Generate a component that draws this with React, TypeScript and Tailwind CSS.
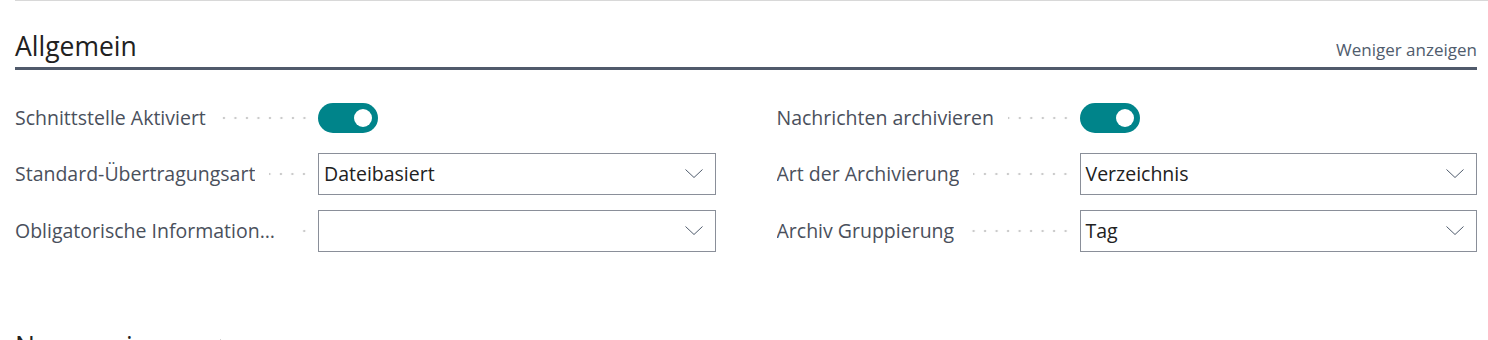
import React from "react";

type Field =
  | { label: string; kind: "toggle"; on: boolean }
  | { label: string; kind: "select"; value: string };

const LEFT: Field[] = [
  { label: "Schnittstelle Aktiviert", kind: "toggle", on: true },
  { label: "Standard-Übertragungsart", kind: "select", value: "Dateibasiert" },
  { label: "Obligatorische Informationen", kind: "select", value: "" },
];

const RIGHT: Field[] = [
  { label: "Nachrichten archivieren", kind: "toggle", on: true },
  { label: "Art der Archivierung", kind: "select", value: "Verzeichnis" },
  { label: "Archiv Gruppierung", kind: "select", value: "Tag" },
];

function ChevronDown() {
  return (
    <svg width="18" height="9" viewBox="0 0 18 9" fill="none" className="shrink-0">
      <path d="M0.5 0.5 L9 8.5 L17.5 0.5" stroke="#505c6d" strokeWidth="1" />
    </svg>
  );
}

function Toggle({ on }: { on: boolean }) {
  return (
    <div
      className={`flex h-[30px] w-[60px] items-center rounded-full px-[6px] ${
        on ? "justify-end bg-[#00848a]" : "justify-start border border-[#605e5c] bg-white"
      }`}
    >
      <div className={`h-[18px] w-[18px] rounded-full ${on ? "bg-white" : "bg-[#605e5c]"}`} />
    </div>
  );
}

function Select({ value }: { value: string }) {
  return (
    <div className="flex h-[42px] w-full items-center justify-between border border-[#8a8f99] bg-white pl-[5px] pr-[12px]">
      <span className="text-[19.5px] text-[#212121]">{value}</span>
      <ChevronDown />
    </div>
  );
}

function FieldRow({ field }: { field: Field }) {
  return (
    <div className="flex h-[42px] items-center">
      <div className="flex w-[303px] shrink-0 items-center pr-[8px]">
        <span className="max-w-[266px] truncate text-[19.5px] text-[#4a505c]">
          {field.label}
        </span>
        <div className="ml-[14px] h-[4px] min-w-0 flex-1 bg-[radial-gradient(circle,#cbcbcb_1px,transparent_1.6px)] bg-[length:11.5px_4px] bg-right bg-repeat-x" />
      </div>
      <div className="flex-1">
        {field.kind === "toggle" ? <Toggle on={field.on} /> : <Select value={field.value} />}
      </div>
    </div>
  );
}

export default function App() {
  return (
    <div className="h-[340px] w-full overflow-hidden bg-white font-['Open_Sans',sans-serif]">
      <div className="pl-[15px]">
        <div className="h-px bg-[#d8d8d8]" />
      </div>

      <div className="pl-[15px] pr-[11px]">
        <div className="flex items-baseline justify-between border-b-[3px] border-[#505a6b] pb-[4px] pt-[29px]">
          <h2 className="text-[26.5px] leading-[32px] text-[#212121]">Allgemein</h2>
          <button className="text-[17px] text-[#505c6d]">Weniger anzeigen</button>
        </div>

        <div className="mt-[27px] flex flex-col">
          {LEFT.map((l, i) => (
            <div
              key={l.label}
              className={`grid grid-cols-2 gap-x-[61px] ${i === 1 ? "mt-[14px]" : ""} ${
                i === 2 ? "mt-[15px]" : ""
              }`}
            >
              <FieldRow field={l} />
              <FieldRow field={RIGHT[i]} />
            </div>
          ))}
        </div>

        <div className="mt-[78px] flex items-center gap-[14px]">
          <h2 className="text-[26.5px] leading-[32px] text-[#212121]">Nummerierung</h2>
          <svg width="8" height="14" viewBox="0 0 8 14" fill="none">
            <path d="M1 1 L7 7 L1 13" stroke="#212121" strokeWidth="1.2" />
          </svg>
        </div>
      </div>
    </div>
  );
}
